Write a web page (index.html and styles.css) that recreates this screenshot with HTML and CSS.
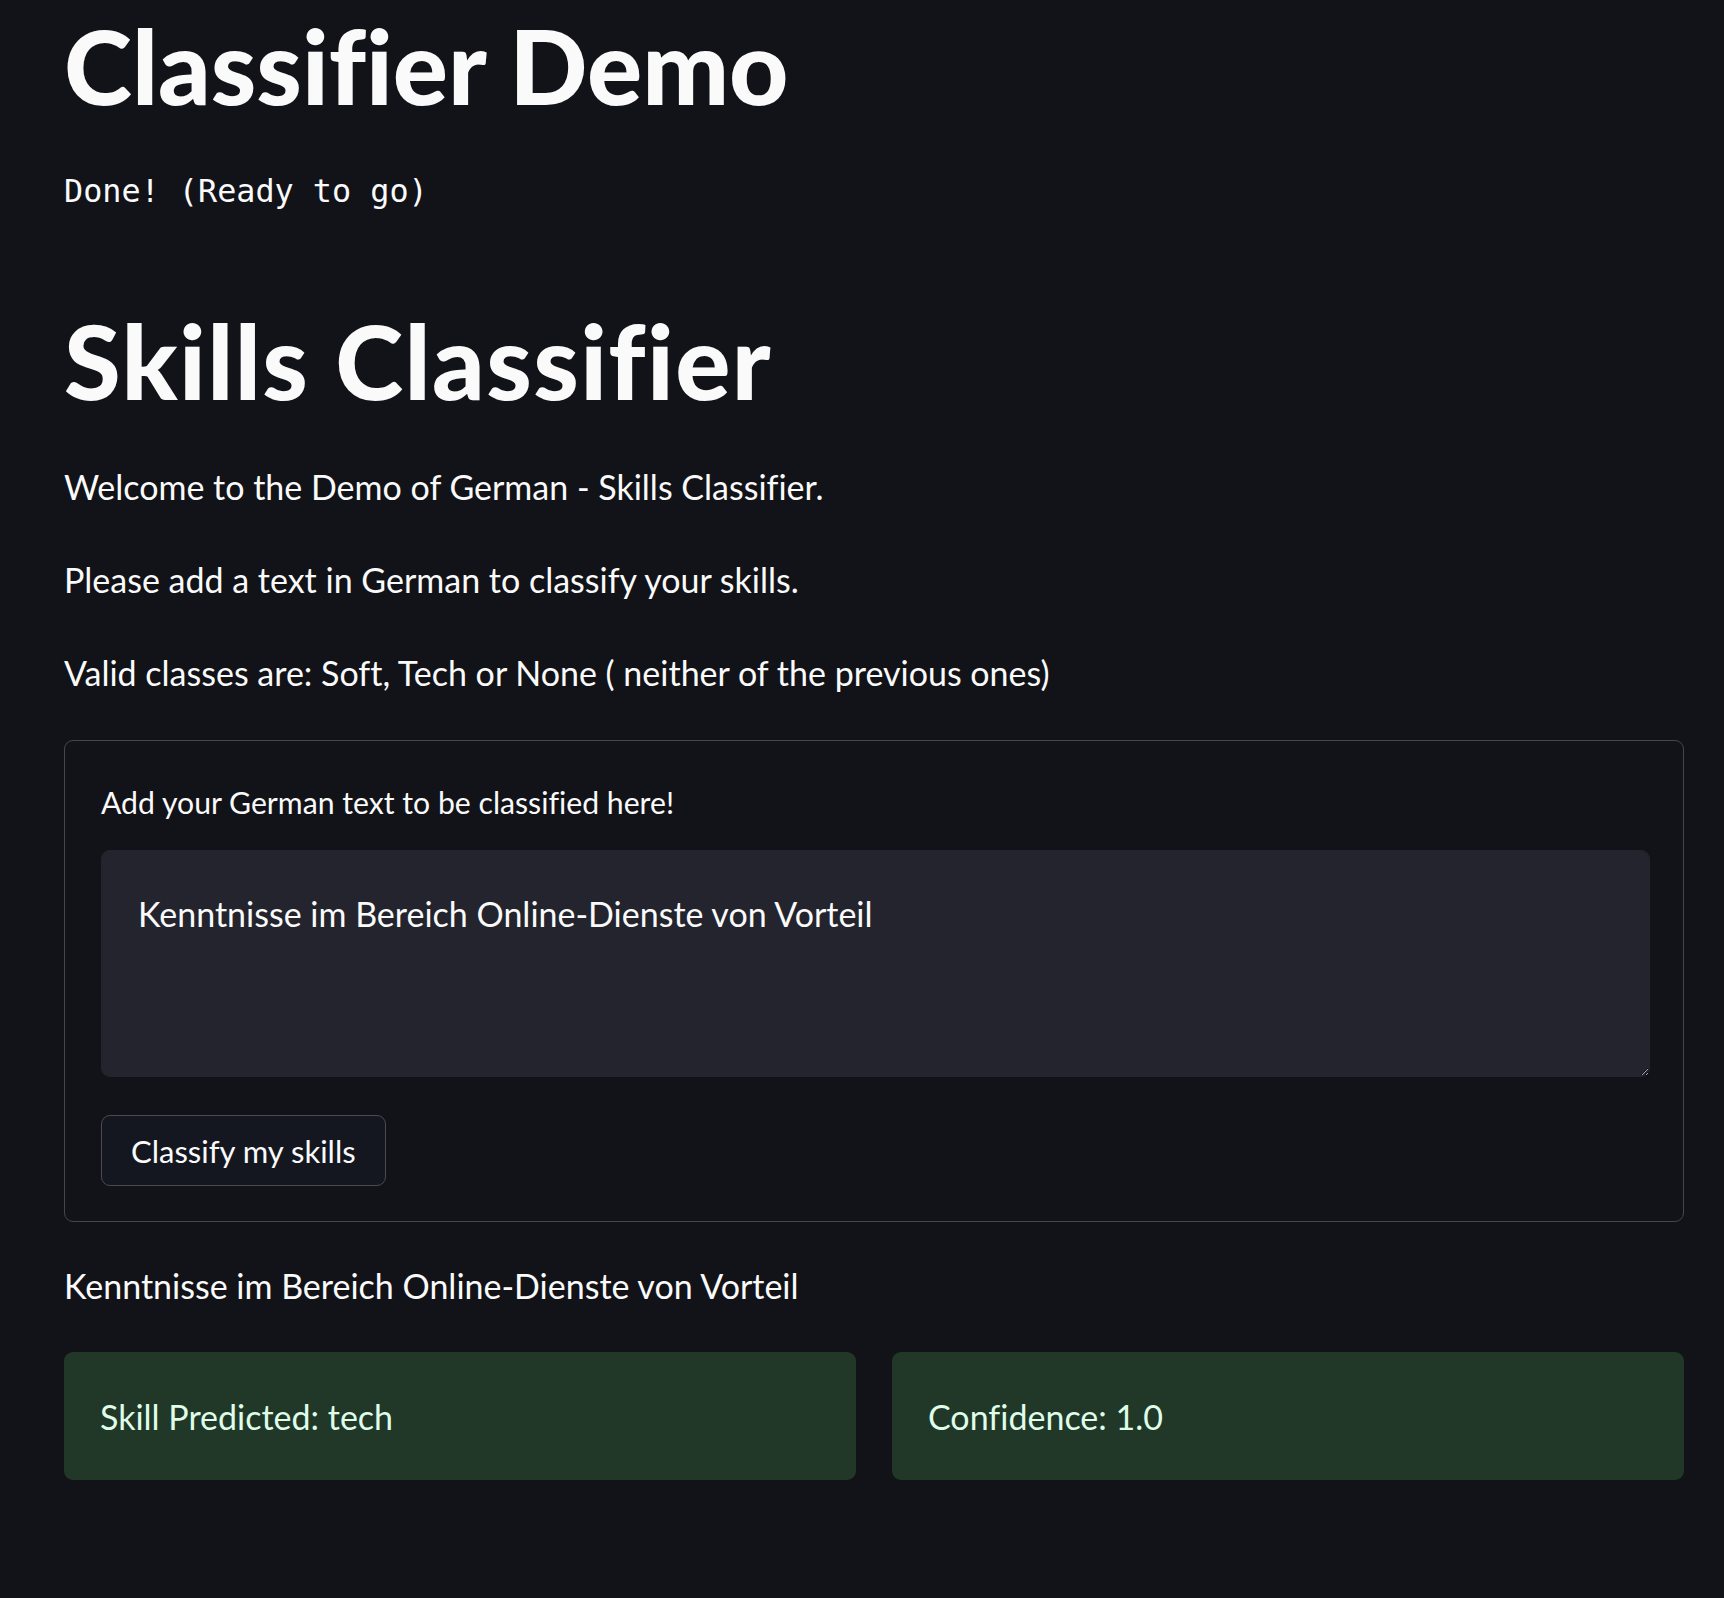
FILE: index.html
```html
<!DOCTYPE html>
<html lang="en">
<head>
<meta charset="utf-8">
<title>Classifier Demo</title>
<link rel="stylesheet" href="styles.css">
</head>
<body>
<main class="app">
  <h1 class="title title-first">Classifier Demo</h1>
  <pre class="status">Done! (Ready to go)</pre>
  <h1 class="title title-second">Skills Classifier</h1>
  <p class="text first-text">Welcome to the Demo of German - Skills Classifier.</p>
  <p class="text">Please add a text in German to classify your skills.</p>
  <p class="text">Valid classes are: Soft, Tech or None ( neither of the previous ones)</p>
  <form class="form">
    <label class="label" for="skill">Add your German text to be classified here!</label>
    <textarea id="skill" class="textarea">Kenntnisse im Bereich Online-Dienste von Vorteil</textarea>
    <button type="button" class="btn">Classify my skills</button>
  </form>
  <p class="text echo">Kenntnisse im Bereich Online-Dienste von Vorteil</p>
  <div class="results">
    <div class="alert"><span>Skill Predicted: tech</span></div>
    <div class="alert"><span>Confidence: 1.0</span></div>
  </div>
</main>
</body>
</html>
```
FILE: styles.css
```css
html, body {
  margin: 0;
  padding: 0;
  background: #121318;
}
body {
  color: #fafafa;
  font-family: Lato, "Open Sans", sans-serif;
  font-variant-ligatures: none;
}
.app {
  width: 1620px;
  margin-left: 64px;
  display: flex;
  flex-direction: column;
}
.title {
  margin: 0;
  font-size: 103px;
  line-height: 115px;
  font-weight: 900;
  letter-spacing: 0;
}
.title-first {
  margin-top: 8px;
}
.status {
  margin: 48px 0 0;
  font-family: "DejaVu Sans Mono", monospace;
  font-size: 31.8px;
  line-height: 40px;
  color: #fafafa;
}
.title-second {
  margin-top: 92px;
  letter-spacing: 1.4px;
}
.text {
  margin: 37px 0 0;
  font-size: 34px;
  line-height: 56px;
}
.first-text {
  margin-top: 41px;
}
.form {
  margin-top: 39px;
  border: 1px solid #45464d;
  border-radius: 9px;
  padding: 36px 33px 35px 36px;
  display: flex;
  flex-direction: column;
  align-items: flex-start;
}
.label {
  font-size: 30.2px;
  line-height: 50px;
}
.textarea {
  margin-top: 23px;
  box-sizing: border-box;
  width: 100%;
  height: 227px;
  background: #23242d;
  border: 1px solid #23242d;
  border-radius: 9px;
  color: #fafafa;
  font-family: Lato, "Open Sans", sans-serif;
  font-variant-ligatures: none;
  font-size: 34px;
  line-height: 50px;
  padding: 38px 36px 24px;
  resize: vertical;
  outline: none;
}
.btn {
  margin-top: 38px;
  height: 71px;
  padding: 0 29px;
  background: #141720;
  border: 1px solid #4a4b52;
  border-radius: 9px;
  color: #fafafa;
  font-family: Lato, "Open Sans", sans-serif;
  font-variant-ligatures: none;
  font-size: 31px;
}
.echo {
  margin-top: 36px;
}
.results {
  margin-top: 38px;
  display: grid;
  grid-template-columns: 1fr 1fr;
  gap: 36px;
}
.alert {
  height: 128px;
  box-sizing: border-box;
  padding: 0 36px;
  background: #213829;
  border-radius: 9px;
  color: #dffde9;
  font-size: 34px;
  display: flex;
  align-items: center;
}
```
